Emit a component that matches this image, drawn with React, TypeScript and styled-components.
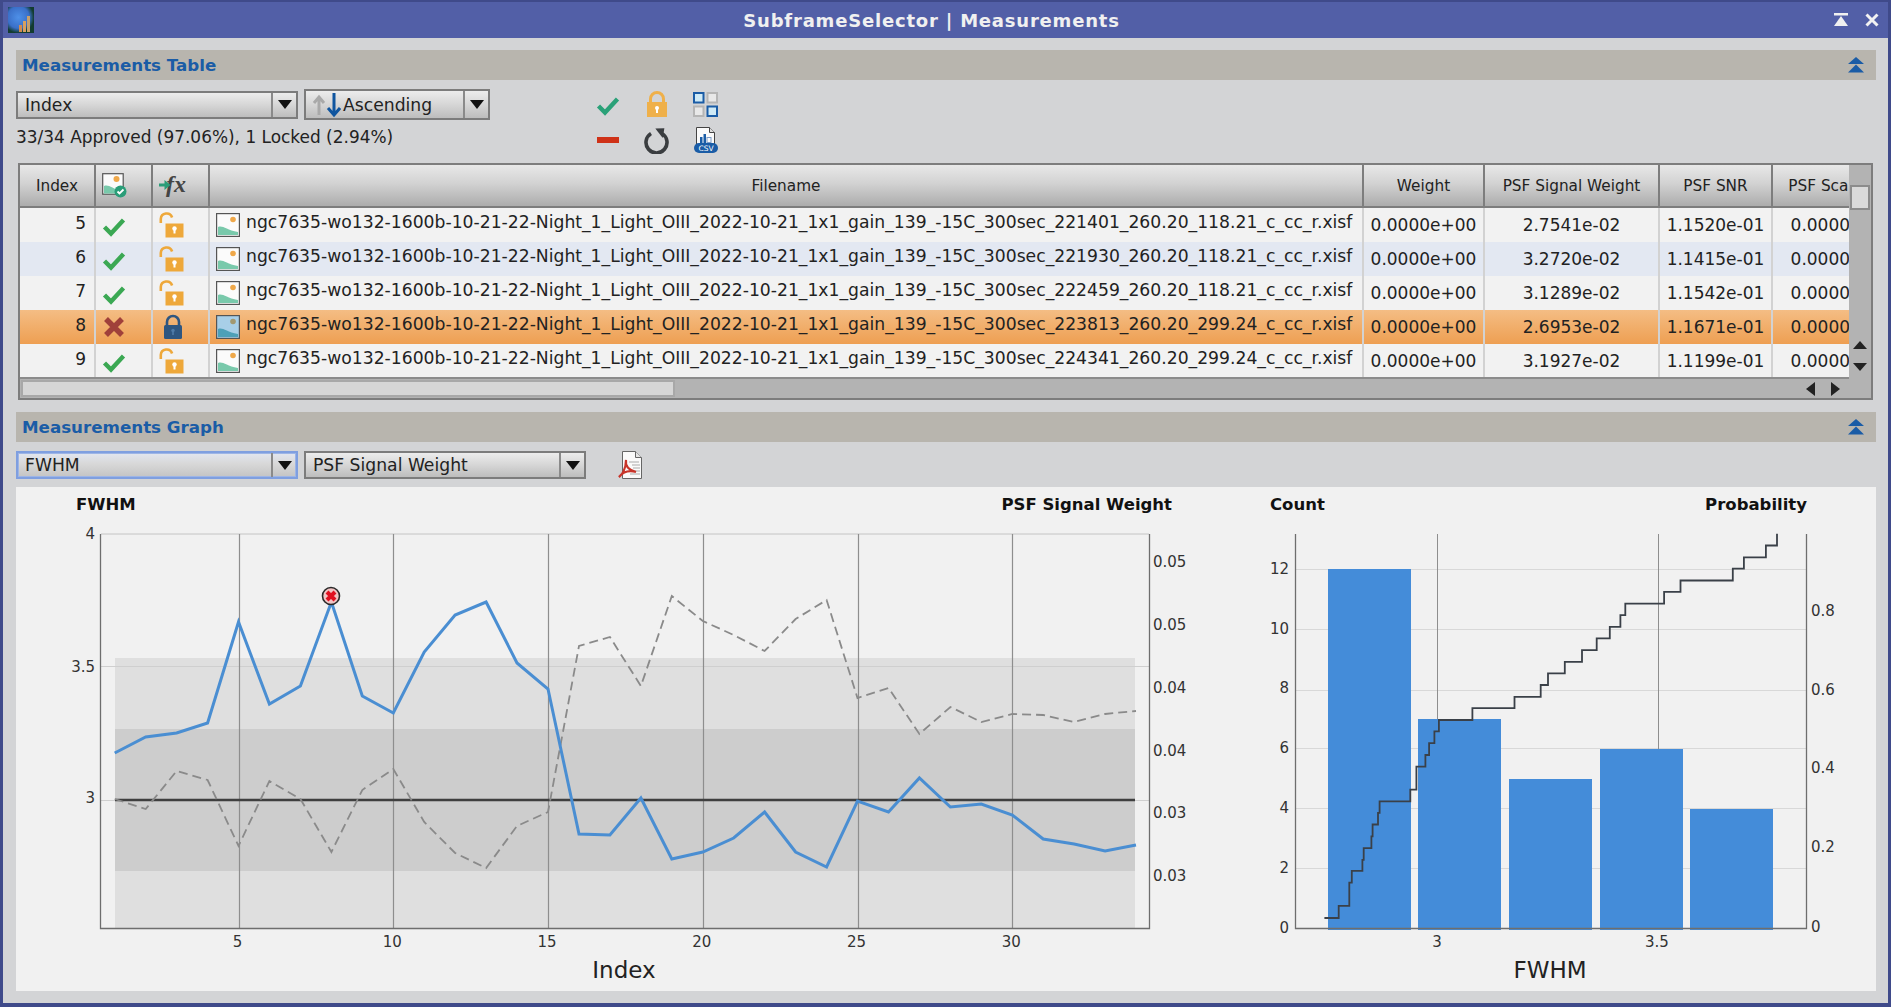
import React from "react";
import styled, { createGlobalStyle, css } from "styled-components";

const Global = createGlobalStyle`
  html, body { margin: 0; padding: 0; background: #d3d4d6; }
  body { font-family: "DejaVu Sans", sans-serif; overflow: hidden; }
`;

const Windowed = styled.div`
  width: 1891px; height: 1007px; box-sizing: border-box;
  display: flex; flex-direction: column;
  background: #3f4a8a; padding: 2px 3px 4px 3px;
`;
const TitleBar = styled.div`
  height: 36px; flex: none; background: #525fa7; display: flex; align-items: center;
  padding: 0 9px 0 5px; color: #f0f0f0;
`;
const TitleText = styled.div`
  flex: 1; text-align: center; font-size: 18px; font-weight: 700; letter-spacing: 0.8px; padding-right: 4px;
`;
const TitleButtons = styled.div`display: flex; align-items: center; gap: 16px;`;
const Body = styled.div`
  flex: 1; background: #d3d4d6; padding: 12px 12px 12px 13px; display: flex; flex-direction: column; min-height: 0;
`;
const SectionBar = styled.div`
  height: 30px; flex: none; background: #b8b5ae; display: flex; align-items: center; justify-content: space-between;
  padding: 0 11px 0 6px; color: #1a5ca6; font-size: 16.7px; font-weight: 700;
`;
const TableToolbar = styled.div`display: flex; height: 83px; flex: none;`;
const ToolbarLeft = styled.div`width: 580px; display: flex; flex-direction: column; padding-top: 9px; box-sizing: border-box;`;
const ComboRow = styled.div`display: flex; align-items: center; gap: 6px;`;
const Combo = styled.div<{ $w: number; $h?: number; $focus?: boolean }>`
  width: ${p => p.$w}px; height: ${p => p.$h ?? 28}px; box-sizing: border-box; display: flex; align-items: center;
  border: 2px solid ${p => (p.$focus ? "#7f9fe0" : "#7c7c7c")};
  background: ${p => p.$focus ? "linear-gradient(#e2e6f0, #d8d8d8 45%, #c4c4c4)" : "linear-gradient(#ececec, #d6d6d6 50%, #bdbdbd)"};
  font-size: 17.2px; color: #222; padding-left: 7px;
  ${p => p.$focus && css`box-shadow: inset 0 0 0 1px #9db5e6;`}
`;
const ComboLabel = styled.span`flex: 1; white-space: nowrap;`;
const ComboArrow = styled.div`
  width: 25px; height: 100%; flex: none; box-sizing: border-box; border-left: 2px solid #8a8a8a; display: flex; align-items: center; justify-content: center;
  &::after { content: ""; border-left: 7px solid transparent; border-right: 7px solid transparent; border-top: 9px solid #111; }
`;
const Status = styled.div`font-size: 16.95px; color: #222; margin-top: 7px; white-space: nowrap;`;
const IconGrid = styled.div`
  display: grid; grid-template-columns: repeat(3, 49px); grid-auto-rows: 36px; margin-left: -13px; margin-top: 6px;
  place-items: center;
`;

const TableFrame = styled.div`
  height: 237px; flex: none; margin-left: 2px; margin-right: 3px; box-sizing: border-box; border: 2px solid #7d7d7d;
  display: grid; grid-template-columns: 1fr 22px; grid-template-rows: 1fr 21px; background: #b3b3b3;
`;
const Viewport = styled.div`overflow: hidden; min-width: 0; min-height: 0;`;
const Row = styled.div<{ $kind?: "head" | "alt" | "sel" }>`
  display: flex; width: 1900px;
  height: ${p => (p.$kind === "head" ? 43 : 34)}px;
  ${p => p.$kind === "head" && css`background: linear-gradient(#e8e8e8, #d2d2d2 45%, #acacac); border-bottom: 2px solid #7d7d7d; box-sizing: border-box;`}
  ${p => p.$kind === "alt" && css`background: #e3e8f2;`}
  ${p => p.$kind === "sel" && css`background: linear-gradient(#f4bd84, #ee9f52);`}
  ${p => !p.$kind && css`background: #f2f2f2;`}
`;
const Cell = styled.div<{ $w: number; $align?: string; $head?: boolean }>`
  width: ${p => p.$w}px; flex: none; box-sizing: border-box; display: flex; align-items: center; white-space: nowrap; overflow: hidden;
  justify-content: ${p => p.$align ?? "center"};
  border-right: 2px solid ${p => (p.$head ? "#7d7d7d" : "#d2d2d2")};
  font-size: ${p => (p.$head ? 15.3 : 17)}px; color: #222;
`;
const IconCell = styled(Cell)`justify-content: flex-start; padding-left: 6px;`;
const IndexCell = styled(Cell)`padding-right: 8px; padding-bottom: 5px; font-size: 17px;`;
const NameCell = styled(Cell)`padding-left: 6px; gap: 6px; font-size: 17.22px;`;
const NameText = styled.span`position: relative; top: -3px;`;
const VScroll = styled.div`display: flex; flex-direction: column; align-items: center; background: #b3b3b3; padding-bottom: 4px;`;
const VThumb = styled.div`
  width: 20px; height: 25px; box-sizing: border-box; margin-top: 20px; border: 2px solid #8c8c8c; background: #dadada; flex: none;
`;
const VArrows = styled.div`margin-top: auto; display: flex; flex-direction: column; gap: 14px; align-items: center; padding-bottom: 2px;`;
const ArrowShape = styled.div<{ $dir: "up" | "down" | "left" | "right" }>`
  width: 0; height: 0;
  ${p => p.$dir === "up" && css`border-left: 7px solid transparent; border-right: 7px solid transparent; border-bottom: 8px solid #222;`}
  ${p => p.$dir === "down" && css`border-left: 7px solid transparent; border-right: 7px solid transparent; border-top: 8px solid #222;`}
  ${p => p.$dir === "left" && css`border-top: 7px solid transparent; border-bottom: 7px solid transparent; border-right: 9px solid #222;`}
  ${p => p.$dir === "right" && css`border-top: 7px solid transparent; border-bottom: 7px solid transparent; border-left: 9px solid #222;`}
`;
const HScroll = styled.div`
  display: flex; align-items: center; background: #b3b3b3; border-top: 2px solid #8c8c8c; box-sizing: border-box; padding-left: 1px; padding-right: 9px;
`;
const HThumb = styled.div`width: 654px; height: 17px; box-sizing: border-box; border: 2px solid #a8a8a8; background: #d6d6d6;`;
const HArrows = styled.div`margin-left: auto; display: flex; gap: 16px;`;
const Corner = styled.div`background: #b3b3b3;`;

const GraphSection = styled.div`margin-top: 12px; display: flex; flex-direction: column; flex: 1; min-height: 0;`;
const GraphToolbar = styled.div`display: flex; align-items: center; gap: 6px; height: 45px; flex: none; padding-top: 1px; box-sizing: border-box;`;
const PdfSlot = styled.div`margin-left: 25px; display: flex;`;
const GraphPanel = styled.div`flex: 1; background: #f1f1f1; display: flex; min-height: 0;`;
const ChartSvg = styled.svg`display: block; flex: none;`;
const AxisText = styled.text`font-family: "DejaVu Sans", sans-serif; font-size: 15px; fill: #333;`;
const TitleLabel = styled.text`font-family: "DejaVu Sans", sans-serif; font-size: 16.5px; font-weight: 700; fill: #111;`;
const XTitle = styled.text`font-family: "DejaVu Sans", sans-serif; font-size: 23px; fill: #222;`;

const Check = ({ c = "#3ba853", s = 24 }: { c?: string; s?: number }) => (
  <svg width={s} height={s} viewBox="0 0 24 24" style={{ position: "relative", top: 1 }}>
    <path d="M2.500 13l6.500 6.500L21.500 6" fill="none" stroke={c} strokeWidth="4.400" />
  </svg>
);
const Cross = () => (
  <svg width="24" height="24" viewBox="0 0 24 24"><path d="M4 4l16 16M20 4L4 20" fill="none" stroke="#a0403a" strokeWidth="5.500" /></svg>
);
const OpenLock = () => (
  <svg width="25" height="26" viewBox="0 0 25 26" style={{ flex: "none" }}>
    <path d="M1.800 11V7a5.800 5.800 0 0 1 11.300-1.500" fill="none" stroke="#eea83a" strokeWidth="2.600" />
    <rect x="6.500" y="11.500" width="18" height="14" fill="#eea83a" />
    <circle cx="15.500" cy="16.500" r="2.200" fill="#fff" /><rect x="14.500" y="16.500" width="2" height="5" fill="#fff" />
  </svg>
);
const ClosedLock = () => (
  <svg width="24" height="26" viewBox="0 0 24 26" style={{ marginLeft: 2 }}>
    <path d="M6 12V8a6 6 0 0 1 12 0v4" fill="none" stroke="#2f5680" strokeWidth="2.600" />
    <rect x="3" y="11" width="18" height="14" rx="1.500" fill="#2f5680" />
    <circle cx="12" cy="16.500" r="1.700" fill="#4f7ba8" /><rect x="11.200" y="17" width="1.600" height="4" fill="#4f7ba8" />
  </svg>
);
const ImageIcon = ({ sel }: { sel?: boolean }) => (
  <svg width="24" height="24" viewBox="0 0 24 24" style={{ flex: "none" }}>
    <rect x="0.600" y="0.600" width="22.800" height="22.800" fill={sel ? "#a8cfe8" : "#fbfbfb"} stroke="#555" strokeWidth="1.200" />
    <circle cx="17" cy="6.500" r="2.800" fill={sel ? "#a29870" : "#efa84a"} />
    <path d="M2 14c5-2 8 3 20 5v3H2z" fill={sel ? "#4da0b8" : "#79c9ab"} />
  </svg>
);
const HeaderImage = () => (
  <svg width="25" height="25" viewBox="0 0 25 25" style={{ flex: "none" }}>
    <rect x="0.700" y="0.700" width="20.500" height="20.500" fill="#fbfbfb" stroke="#555" strokeWidth="1.200" />
    <circle cx="14.500" cy="6" r="3" fill="#efa84a" />
    <path d="M2 13c5-2 8 3 18 5v2.500H2z" fill="#79c9ab" />
    <circle cx="18.500" cy="18.500" r="6" fill="#2a9d78" />
    <path d="M15.500 18.500l2 2 4-4" fill="none" stroke="#fff" strokeWidth="1.800" />
  </svg>
);
const HeaderFx = () => (
  <svg width="27" height="26" viewBox="0 0 27 26" style={{ flex: "none" }}>
    <text x="7" y="19" fontFamily="Liberation Serif, serif" fontStyle="italic" fontWeight="700" fontSize="24" fill="#444">fx</text>
    <path d="M0 12h7" fill="none" stroke="#2a9d78" strokeWidth="3" />
    <path d="M5.500 7l6 5-6 5z" fill="#2a9d78" />
  </svg>
);
const DoubleUp = () => (
  <svg width="18" height="16" viewBox="0 0 18 16"><path d="M9 0l8 7H1zM9 7.500l8 8H1z" fill="#1a5ca6" /></svg>
);
const BigLock = () => (
  <svg width="22" height="26" viewBox="0 0 22 26">
    <path d="M4.500 12V8a6.500 6.500 0 0 1 13 0v4" fill="none" stroke="#efb04a" strokeWidth="3" />
    <rect x="1" y="11" width="20" height="15" fill="#efb04a" />
    <circle cx="11" cy="17" r="2" fill="#fff" /><rect x="10" y="17" width="2" height="5" fill="#fff" />
  </svg>
);
const GridIcon = () => (
  <svg width="25" height="25" viewBox="0 0 25 25">
    <rect x="1" y="1" width="9.500" height="9.500" fill="#cfeaf6" stroke="#1a5ca6" strokeWidth="2" />
    <rect x="14.500" y="1" width="9.500" height="9.500" fill="#e8e8e8" stroke="#b5b5b5" strokeWidth="2" />
    <rect x="1" y="14.500" width="9.500" height="9.500" fill="#e8e8e8" stroke="#b5b5b5" strokeWidth="2" />
    <rect x="14.500" y="14.500" width="9.500" height="9.500" fill="#cfeaf6" stroke="#1a5ca6" strokeWidth="2" />
  </svg>
);
const Minus = () => (
  <svg width="22" height="8" viewBox="0 0 22 8"><rect width="22" height="6" y="1" fill="#cf3218" /></svg>
);
const Reset = () => (
  <svg width="27" height="27" viewBox="0 0 27 27">
    <path d="M8 6.500a10.500 10.500 0 1 0 11 0" fill="none" stroke="#3a3d40" strokeWidth="3.600" />
    <path d="M13 1l9 1-3 9.500z" fill="#3a3d40" transform="rotate(-8 16 6)" />
  </svg>
);
const Csv = () => (
  <svg width="26" height="26" viewBox="0 0 26 26">
    <path d="M3.500 0.500h13l5 5V18h-18z" fill="#fafafa" stroke="#444" />
    <path d="M16.500 0.500v5h5" fill="#ddd" stroke="#444" />
    <rect x="7" y="10" width="2.500" height="6" fill="#1a5ca6" /><rect x="10.500" y="7" width="2.500" height="9" fill="#1a5ca6" />
    <rect x="14" y="10.500" width="4" height="5" fill="none" stroke="#7c9cc8" />
    <rect x="1" y="16" width="24" height="10" rx="5" fill="#1a5ca6" />
    <text x="13" y="24.300" textAnchor="middle" fontFamily="DejaVu Sans, sans-serif" fontSize="7.500" fill="#fff">CSV</text>
  </svg>
);
const Pdf = () => (
  <svg width="26" height="28" viewBox="0 0 26 28">
    <path d="M5.500 0.500h13l6 6v21h-19z" fill="#fafafa" stroke="#666" />
    <path d="M18.500 0.500v6h6" fill="#e5e5e5" stroke="#666" />
    <path d="M12 11h10M15 14h8M16 17h7M16 20h7M13 23h10" stroke="#aaa" />
    <path d="M9 9c-1 6 3 10 10 12-7-2-13 0-17 5 3-2 7-8 7-17z" fill="none" stroke="#c8342a" strokeWidth="2.200" />
  </svg>
);
const AppIcon = () => (
  <svg width="26" height="26" viewBox="0 0 26 26">
    <defs>
      <radialGradient id="g1" cx="0.400" cy="0.400" r="0.600"><stop offset="0" stopColor="#4e90e8" /><stop offset="0.700" stopColor="#3a6fc8" /><stop offset="1" stopColor="#123c30" /></radialGradient>
    </defs>
    <rect width="26" height="26" fill="url(#g1)" />
    <rect x="11" y="18" width="3" height="7" fill="#d08a50" /><rect x="15" y="14" width="3" height="11" fill="#d8a060" /><rect x="19" y="9" width="3" height="16" fill="#c9a06c" />
  </svg>
);
const PinIcon = () => (
  <svg width="16" height="14" viewBox="0 0 16 14"><rect x="1" y="0" width="14" height="2.500" fill="#f0f0f0" /><path d="M8 3l7 10H1z" fill="#f0f0f0" /></svg>
);
const CloseIcon = () => (
  <svg width="14" height="14" viewBox="0 0 14 14"><path d="M1.500 1.500l11 11M12.500 1.500l-11 11" stroke="#f2f2f2" strokeWidth="3" /></svg>
);
const SortArrows = () => (
  <svg width="30" height="26" viewBox="0 0 30 26" style={{ flex: "none", marginLeft: -2, marginRight: 2 }}>
    <path d="M8 23V7M3 11l5-6 5 6" fill="none" stroke="#a9a9a9" strokeWidth="3" />
    <path d="M23 1v21M17 16l6 7 6-7" fill="none" stroke="#0f559f" strokeWidth="3" />
  </svg>
);

const cols = [76, 57, 57, 1154, 121, 175, 113, 143];
const heads = ["Index", "", "", "Filename", "Weight", "PSF Signal Weight", "PSF SNR", "PSF Scale SNR"];
const rows = [
  { i: 5, t: "221401_260.20_118.21", a: "2.7541e-02", b: "1.1520e-01" },
  { i: 6, t: "221930_260.20_118.21", a: "3.2720e-02", b: "1.1415e-01" },
  { i: 7, t: "222459_260.20_118.21", a: "3.1289e-02", b: "1.1542e-01" },
  { i: 8, t: "223813_260.20_299.24", a: "2.6953e-02", b: "1.1671e-01" },
  { i: 9, t: "224341_260.20_299.24", a: "3.1927e-02", b: "1.1199e-01" },
];
const base = "ngc7635-wo132-1600b-10-21-22-Night_1_Light_OIII_2022-10-21_1x1_gain_139_-15C_300sec_";

const blue = [753, 737, 733, 723, 622, 704, 686, 602, 696, 713, 652, 615, 602, 663, 689, 834, 835, 798, 859, 852, 838, 812, 852, 867, 801, 812, 778, 807, 804, 815, 839, 844, 851, 845];
const dash = [799, 809, 771, 780, 846, 781, 799, 852, 790, 769, 822, 853, 868, 826, 812, 646, 637, 686, 596, 621, 635, 651, 619, 600, 698, 688, 734, 707, 722, 714, 715, 722, 714, 711];
const ix = (n: number) => 114.7 + (n - 1) * 30.95;
const poly = (a: number[]) => a.map((y, k) => `${ix(k + 1).toFixed(1)},${y}`).join(" ");

const stepsZ = [
  [182, 1303], [217, 1303], [217, 1267], [243, 1267], [243, 1198], [249, 1198], [249, 1163], [275, 1163], [275, 1130], [278, 1130], [278, 1095], [297, 1095], [297, 1060], [300, 1060], [300, 1025], [313, 1025], [313, 990], [317, 990], [317, 956], [392, 956], [392, 921], [407, 921], [407, 853], [429, 853], [429, 818], [438, 818], [438, 783], [451, 783], [451, 748], [462, 748], [462, 714], [544, 714], [544, 679], [647, 679], [647, 645], [711, 645], [711, 610], [729, 610], [729, 575], [770, 575], [770, 541], [812, 541], [812, 506], [848, 506], [848, 471], [880, 471], [880, 437], [906, 437], [906, 402], [918, 402], [918, 368], [1013, 368], [1013, 333], [1053, 333], [1053, 299], [1181, 299], [1181, 264], [1208, 264], [1208, 230], [1262, 230], [1262, 195], [1289, 195], [1289, 160],
];
const steps = stepsZ.map(([x, y]) => `${(1250 + x / 2.446).toFixed(1)},${(480 + y / 2.975).toFixed(1)}`).join(" ");

const LeftChart = () => (
  <ChartSvg width={1244} height={504} viewBox="16 487 1244 504">
    <TitleLabel x={76} y={510}>FWHM</TitleLabel>
    <TitleLabel x={1172} y={510} textAnchor="end">PSF Signal Weight</TitleLabel>
    <rect x={115} y={658} width={1020} height={270} fill="#dfdfdf" />
    <rect x={115} y={729} width={1020} height={142} fill="#cdcdcd" />
    <path d="M101 534H1149" stroke="#c4c4c4" />
    <path d="M101 666.500H1149M101 800.500H1149" stroke="#cfcfcf" />
    {[5, 10, 15, 20, 25, 30].map(n => (
      <path key={n} d={`M${ix(n).toFixed(0)}.5 534V928`} stroke="#8e8e8e" strokeWidth="1.200" />
    ))}
    <path d="M100.500 534V928.500H1149.500V534" fill="none" stroke="#6e6e6e" strokeWidth="1.300" />
    <line x1={115} x2={1135} y1={800} y2={800} stroke="#3f3f3f" strokeWidth="2.600" />
    <polyline points={poly(dash)} fill="none" stroke="#8a8a8a" strokeWidth="1.800" strokeDasharray="9 5" />
    <polyline points={poly(blue)} fill="none" stroke="#4a8ed2" strokeWidth="3" />
    <circle cx={331} cy={596} r={8.500} fill="#f2c4c4" stroke="#2a2a2a" strokeWidth="1.600" />
    <path d="M327 592l8 8M335 592l-8 8" stroke="#e01020" strokeWidth="4" />
    {[["4", 539], ["3.5", 672], ["3", 803]].map(([t, y]) => (
      <AxisText key={t} x={95} y={y} textAnchor="end">{t}</AxisText>
    ))}
    {[5, 10, 15, 20, 25, 30].map(n => (
      <AxisText key={n} x={ix(n) - 1} y={947} textAnchor="middle">{n}</AxisText>
    ))}
    {[["0.05", 567], ["0.05", 630], ["0.04", 693], ["0.04", 756], ["0.03", 818], ["0.03", 881]].map(([t, y]) => (
      <AxisText key={y} x={1153} y={y}>{t}</AxisText>
    ))}
    <XTitle x={624} y={978} textAnchor="middle">Index</XTitle>
  </ChartSvg>
);

const bars = [[1328, 569], [1418, 719], [1509, 779], [1600, 749], [1690, 809]];
const RightChart = () => (
  <ChartSvg width={615} height={504} viewBox="1260 487 615 504">
    <TitleLabel x={1270} y={510}>Count</TitleLabel>
    <TitleLabel x={1807} y={510} textAnchor="end">Probability</TitleLabel>
    {[569, 629, 690, 748, 808, 868].map(y => (
      <path key={y} d={`M1295 ${y}.5H1806`} stroke="#d8d8d8" />
    ))}
    <path d="M1437.500 534V929M1658.500 534V929" stroke="#8e8e8e" />
    {bars.map(([x, y]) => (
      <rect key={x} x={x} y={y} width={83} height={930 - y} fill="#448cd9" />
    ))}
    <path d="M1295.500 534V928.500H1806.500V534" fill="none" stroke="#6e6e6e" strokeWidth="1.300" />
    <polyline points={steps} fill="none" stroke="#3a4048" strokeWidth="1.800" />
    {[["12", 574], ["10", 634], ["8", 693], ["6", 753], ["4", 813], ["2", 873], ["0", 933]].map(([t, y]) => (
      <AxisText key={t} x={1289} y={y} textAnchor="end">{t}</AxisText>
    ))}
    {[["0.8", 616], ["0.6", 695], ["0.4", 773], ["0.2", 852], ["0", 932]].map(([t, y]) => (
      <AxisText key={t} x={1811} y={y}>{t}</AxisText>
    ))}
    <AxisText x={1437} y={947} textAnchor="middle">3</AxisText>
    <AxisText x={1657} y={947} textAnchor="middle">3.5</AxisText>
    <XTitle x={1550} y={978} textAnchor="middle">FWHM</XTitle>
  </ChartSvg>
);

export default function App() {
  return (
    <Windowed>
      <Global />
      <TitleBar>
        <AppIcon />
        <TitleText>SubframeSelector | Measurements</TitleText>
        <TitleButtons><PinIcon /><CloseIcon /></TitleButtons>
      </TitleBar>
      <Body>
        <SectionBar>Measurements Table<DoubleUp /></SectionBar>
        <TableToolbar>
          <ToolbarLeft>
            <ComboRow>
              <Combo $w={282}><ComboLabel>Index</ComboLabel><ComboArrow /></Combo>
              <Combo $w={186} $h={31}><SortArrows /><ComboLabel>Ascending</ComboLabel><ComboArrow /></Combo>
            </ComboRow>
            <Status>33/34 Approved (97.06%), 1 Locked (2.94%)</Status>
          </ToolbarLeft>
          <IconGrid>
            <Check c="#2aa178" s={24} /><BigLock /><GridIcon />
            <Minus /><Reset /><Csv />
          </IconGrid>
        </TableToolbar>
        <TableFrame>
          <Viewport>
            <Row $kind="head">
              {heads.map((h, k) =>
                k === 1 || k === 2 ? (
                  <IconCell key={k} $w={cols[k]} $head>{k === 1 ? <HeaderImage /> : <HeaderFx />}</IconCell>
                ) : (
                  <Cell key={k} $w={cols[k]} $head>{h}</Cell>
                )
              )}
            </Row>
            {rows.map((r, n) => {
              const sel = r.i === 8;
              return (
                <Row key={r.i} $kind={sel ? "sel" : n % 2 === 1 ? "alt" : undefined}>
                  <IndexCell $w={cols[0]} $align="flex-end">{r.i}</IndexCell>
                  <IconCell $w={cols[1]}>{sel ? <Cross /> : <Check />}</IconCell>
                  <IconCell $w={cols[2]}>{sel ? <ClosedLock /> : <OpenLock />}</IconCell>
                  <NameCell $w={cols[3]} $align="flex-start"><ImageIcon sel={sel} /><NameText>{base}{r.t}_c_cc_r.xisf</NameText></NameCell>
                  <Cell $w={cols[4]}>0.0000e+00</Cell>
                  <Cell $w={cols[5]}>{r.a}</Cell>
                  <Cell $w={cols[6]}>{r.b}</Cell>
                  <Cell $w={cols[7]}>0.0000e+00</Cell>
                </Row>
              );
            })}
          </Viewport>
          <VScroll>
            <VThumb />
            <VArrows><ArrowShape $dir="up" /><ArrowShape $dir="down" /></VArrows>
          </VScroll>
          <HScroll>
            <HThumb />
            <HArrows><ArrowShape $dir="left" /><ArrowShape $dir="right" /></HArrows>
          </HScroll>
          <Corner />
        </TableFrame>
        <GraphSection>
          <SectionBar>Measurements Graph<DoubleUp /></SectionBar>
          <GraphToolbar>
            <Combo $w={282} $focus><ComboLabel>FWHM</ComboLabel><ComboArrow /></Combo>
            <Combo $w={282}><ComboLabel>PSF Signal Weight</ComboLabel><ComboArrow /></Combo>
            <PdfSlot><Pdf /></PdfSlot>
          </GraphToolbar>
          <GraphPanel>
            <LeftChart />
            <RightChart />
          </GraphPanel>
        </GraphSection>
      </Body>
    </Windowed>
  );
}
